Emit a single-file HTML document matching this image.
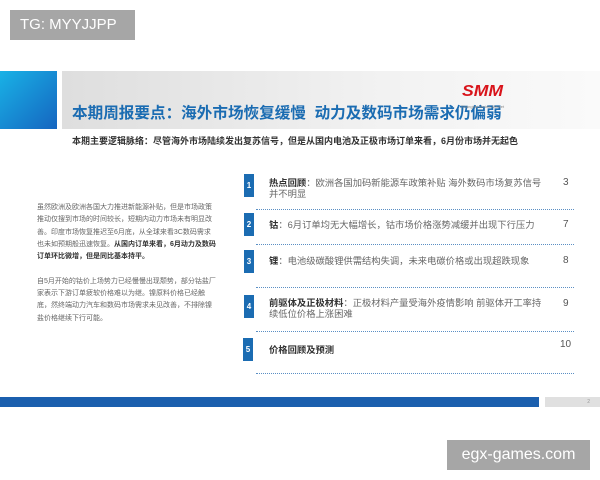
<!DOCTYPE html>
<html><head><meta charset="utf-8"><style>
*{margin:0;padding:0;box-sizing:border-box}
body{width:600px;height:480px;background:#fff;position:relative;overflow:hidden;font-family:"Liberation Sans","Noto Sans CJK SC",sans-serif}
.a{position:absolute}
.tg{left:10px;top:10px;width:125px;height:30px;background:#a6a6a6;color:#fff;font-size:15px;line-height:30px;padding-left:10px}
.wm{left:447px;top:440px;width:143px;height:30px;background:#a6a6a6;color:#fff;font-size:16px;line-height:30px;text-align:center}
.blk{left:0;top:71px;width:57px;height:58px;background:linear-gradient(135deg,#19b2e6,#1565c0)}
.hd{left:62px;top:71px;width:538px;height:58px;background:linear-gradient(90deg,#dedede,#f2f2f2 60%,#fafafa)}
.title{left:72px;top:101px;font-size:15.6px;font-weight:bold;color:#1b6cb2;white-space:nowrap}
.smm{left:462px;top:83px;font-size:16px;font-weight:900;font-style:italic;color:#d9141b;transform:scaleX(1.1);transform-origin:left}
.smms{left:461px;top:104px;font-size:4px;color:#888;white-space:nowrap}
.sub{left:72px;top:134px;font-size:9px;font-weight:bold;color:#333;white-space:nowrap}
.lt{left:37px;top:202px;width:180px;font-size:7px;line-height:12.3px;color:#666}
.lt b{color:#333}
.n{width:10px;height:23px;background:#1b6cb2;color:#fff;font-size:8px;font-weight:bold;text-align:center;line-height:23px;left:244px}
.t{left:269px;font-size:9.3px;line-height:11px;color:#666;width:276px}
.t b{color:#333}
.p{left:563px;font-size:10px;color:#555}
.d{left:256px;width:318px;border-top:1px dotted #5b8fc4;height:0}
.bb{left:0;top:397px;width:539px;height:10px;background:#1b5fae}
.gb{left:545px;top:397px;width:55px;height:10px;background:#e0e0e0;color:#999;font-size:5px;text-align:right;padding-right:10px;line-height:10px}
</style></head><body>
<div class="a tg">TG: MYYJJPP</div>
<div class="a blk"></div>
<div class="a hd"></div>
<div class="a title">本期周报要点：海外市场恢复缓慢&nbsp; 动力及数码市场需求仍偏弱</div>
<div class="a smm">SMM</div>
<div class="a smms">Shanghai Metals Market</div>
<div class="a sub">本期主要逻辑脉络：尽管海外市场陆续发出复苏信号，但是从国内电池及正极市场订单来看，6月份市场并无起色</div>
<div class="a lt">虽然欧洲及欧洲各国大力推进新能源补贴，但是市场政策推动仅搜到市场的时间较长，短期内动力市场未有明显改善。印度市场恢复推迟至6月底，从全球来看3C数码需求也未如预期般迅速恢复。<b>从国内订单来看，6月动力及数码订单环比微增，但是同比基本持平。</b><br><br>自5月开始的钴价上场势力已经慢慢出现颓势，部分钴盐厂家表示下游订单疲软价格难以为继。镍原料价格已经触底，然终端动力汽车和数码市场需求未见改善，不排除镍盐价格继续下行可能。</div>

<div class="a n" style="top:174px">1</div>
<div class="a t" style="top:178px"><b>热点回顾</b>：欧洲各国加码新能源车政策补贴 海外数码市场复苏信号并不明显</div>
<div class="a p" style="top:177px">3</div>
<div class="a d" style="top:209px"></div>
<div class="a n" style="top:213px">2</div>
<div class="a t" style="top:220px"><b>钴</b>：6月订单均无大幅增长，钴市场价格涨势减缓并出现下行压力</div>
<div class="a p" style="top:219px">7</div>
<div class="a d" style="top:244px"></div>
<div class="a n" style="top:250px">3</div>
<div class="a t" style="top:256px"><b>锂</b>：电池级碳酸锂供需结构失调，未来电碳价格或出现超跌现象</div>
<div class="a p" style="top:255px">8</div>
<div class="a d" style="top:287px"></div>
<div class="a n" style="top:295px">4</div>
<div class="a t" style="top:298px"><b>前驱体及正极材料</b>：正极材料产量受海外疫情影响 前驱体开工率持续低位价格上涨困难</div>
<div class="a p" style="top:298px">9</div>
<div class="a d" style="top:331px"></div>
<div class="a n" style="top:338px;left:243px">5</div>
<div class="a t" style="top:345px"><b>价格回顾及预测</b></div>
<div class="a p" style="top:339px;left:560px">10</div>
<div class="a d" style="top:373px"></div>

<div class="a bb"></div>
<div class="a gb">2</div>
<div class="a wm">egx-games.com</div>
</body></html>
